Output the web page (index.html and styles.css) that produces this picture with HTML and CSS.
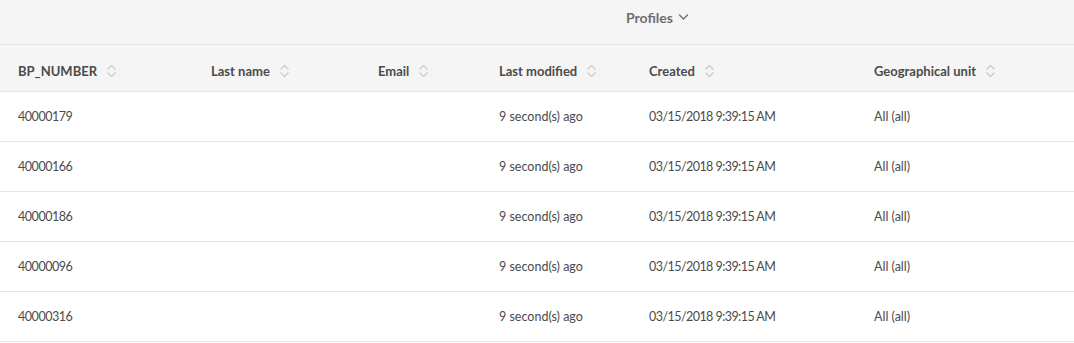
FILE: index.html
```html
<!DOCTYPE html>
<html>
<head>
<meta charset="utf-8">
<link rel="stylesheet" href="styles.css">
</head>
<body>
<div class="page">
  <div class="topbar">
    <div class="profiles">Profiles
      <svg class="chev" width="11" height="10" viewBox="0 0 11 10"><path d="M1.5 3 L5.5 7 L9.5 3" fill="none" stroke="#6e6e6e" stroke-width="1.4" stroke-linecap="round" stroke-linejoin="round"/></svg>
    </div>
  </div>
  <div class="table">
    <div class="row head">
      <div class="cell">BP_NUMBER<svg class="sort" width="11" height="14" viewBox="0 0 11 14"><path d="M1.5 5.5 L5.5 1.5 L9.5 5.5 M1.5 8.5 L5.5 12.5 L9.5 8.5" fill="none" stroke="#cacaca" stroke-width="1.2" stroke-linejoin="round"/></svg></div>
      <div class="cell">Last name<svg class="sort" width="11" height="14" viewBox="0 0 11 14"><path d="M1.5 5.5 L5.5 1.5 L9.5 5.5 M1.5 8.5 L5.5 12.5 L9.5 8.5" fill="none" stroke="#cacaca" stroke-width="1.2" stroke-linejoin="round"/></svg></div>
      <div class="cell">Email<svg class="sort" width="11" height="14" viewBox="0 0 11 14"><path d="M1.5 5.5 L5.5 1.5 L9.5 5.5 M1.5 8.5 L5.5 12.5 L9.5 8.5" fill="none" stroke="#cacaca" stroke-width="1.2" stroke-linejoin="round"/></svg></div>
      <div class="cell">Last modified<svg class="sort" width="11" height="14" viewBox="0 0 11 14"><path d="M1.5 5.5 L5.5 1.5 L9.5 5.5 M1.5 8.5 L5.5 12.5 L9.5 8.5" fill="none" stroke="#cacaca" stroke-width="1.2" stroke-linejoin="round"/></svg></div>
      <div class="cell">Created<svg class="sort" width="11" height="14" viewBox="0 0 11 14"><path d="M1.5 5.5 L5.5 1.5 L9.5 5.5 M1.5 8.5 L5.5 12.5 L9.5 8.5" fill="none" stroke="#cacaca" stroke-width="1.2" stroke-linejoin="round"/></svg></div>
      <div class="cell">Geographical unit<svg class="sort" width="11" height="14" viewBox="0 0 11 14"><path d="M1.5 5.5 L5.5 1.5 L9.5 5.5 M1.5 8.5 L5.5 12.5 L9.5 8.5" fill="none" stroke="#cacaca" stroke-width="1.2" stroke-linejoin="round"/></svg></div>
    </div>
    <div class="row"><div class="cell num">40000179</div><div class="cell"></div><div class="cell"></div><div class="cell">9 second(s) ago</div><div class="cell date">03/15/2018 9:39:15 AM</div><div class="cell">All (all)</div></div>
    <div class="row"><div class="cell num">40000166</div><div class="cell"></div><div class="cell"></div><div class="cell">9 second(s) ago</div><div class="cell date">03/15/2018 9:39:15 AM</div><div class="cell">All (all)</div></div>
    <div class="row"><div class="cell num">40000186</div><div class="cell"></div><div class="cell"></div><div class="cell">9 second(s) ago</div><div class="cell date">03/15/2018 9:39:15 AM</div><div class="cell">All (all)</div></div>
    <div class="row"><div class="cell num">40000096</div><div class="cell"></div><div class="cell"></div><div class="cell">9 second(s) ago</div><div class="cell date">03/15/2018 9:39:15 AM</div><div class="cell">All (all)</div></div>
    <div class="row"><div class="cell num">40000316</div><div class="cell"></div><div class="cell"></div><div class="cell">9 second(s) ago</div><div class="cell date">03/15/2018 9:39:15 AM</div><div class="cell">All (all)</div></div>
  </div>
</div>
</body>
</html>
```

FILE: styles.css
```css
* { box-sizing: border-box; }
html, body { margin: 0; padding: 0; background: #fff; }
body { font-family: Lato, "Open Sans", sans-serif; color: #4b4b4b; }
.page { width: 1074px; }
.topbar {
  height: 45px;
  background: #f5f5f5;
  border-bottom: 1px solid #e3e3e3;
  display: flex;
  justify-content: flex-start;
  padding-left: 626px;
  padding-top: 8px;
}
.profiles {
  font-size: 14px;
  font-weight: 700;
  color: #6e6e6e;
  display: flex;
  align-items: center;
  height: 18px;
  gap: 5px;
}
.row {
  display: grid;
  grid-template-columns: 193px 167px 121px 150px 225px 1fr;
  height: 50px;
  border-bottom: 1px solid #e6e6e6;
  align-items: center;
  font-size: 12.5px;
}
.row.head {
  height: 47px;
  padding-top: 5px;
  background: #f5f5f5;
  font-size: 13px;
  font-weight: 700;
  color: #4b4b4b;
  border-bottom: 1px solid #e3e3e3;
}
.cell {
  padding-left: 18px;
  display: flex;
  align-items: center;
  white-space: nowrap;
}
.cell.num { font-size: 12.5px; letter-spacing: -0.45px; }
.cell.date { font-size: 12.5px; letter-spacing: -0.55px; }
.sort { margin-left: 9px; }
```
